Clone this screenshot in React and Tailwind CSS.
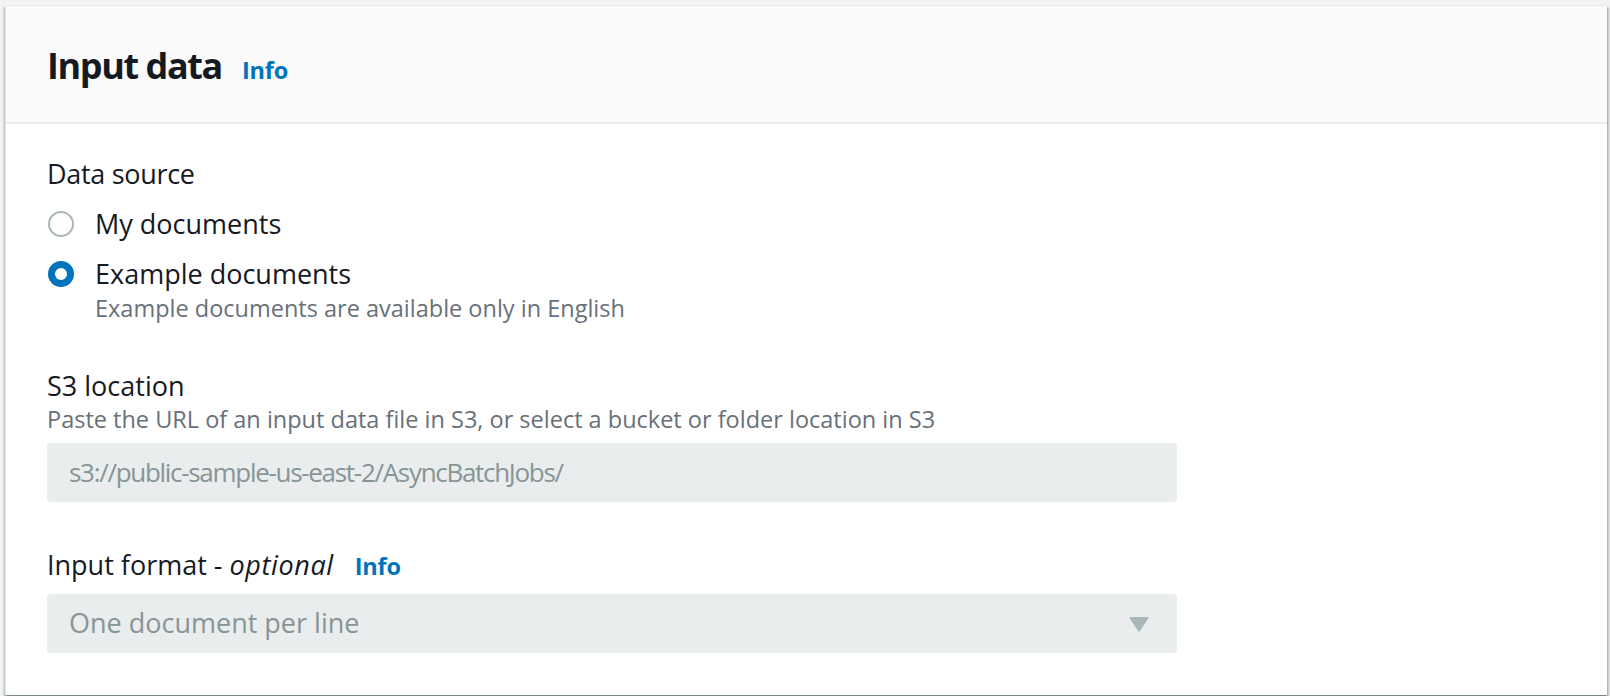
import React from 'react'

function Radio({ checked }) {
  if (checked) {
    return (
      <span className="w-[26px] h-[26px] rounded-full bg-[#0073bb] flex items-center justify-center shrink-0">
        <span className="w-[12px] h-[12px] rounded-full bg-white" />
      </span>
    )
  }
  return <span className="w-[26px] h-[26px] rounded-full border-[2.5px] border-[#aab7b8] bg-white shrink-0" />
}

export default function App() {
  return (
    <div className="w-[1610px] h-[696px] bg-[#f2f3f3] pt-[5px] pl-[5px] overflow-hidden font-['Open_Sans',sans-serif]">
      <div className="w-[1602px] h-[690px] bg-white border-t border-l border-[#e4e8e8] shadow-[0_2px_2px_0_rgba(0,28,36,0.35),2px_2px_2px_0_rgba(0,28,36,0.2),-2px_2px_2px_0_rgba(0,28,36,0.1)]">

        {/* Header */}
        <div className="h-[118px] bg-[#fafafa] border-b-2 border-[#eaeded] flex items-baseline pl-[41px] pt-[40px]">
          <h2 className="text-[36px] leading-[40px] font-bold text-[#16191f] tracking-[-1.4px]">Input data</h2>
          <a className="ml-[20px] text-[23.5px] font-bold text-[#0073bb] tracking-[-0.2px]">Info</a>
        </div>

        {/* Body */}
        <div className="pl-[41px] pt-[32px] text-[#16191f]">
          <div className="text-[27px] leading-[36px] tracking-[-0.3px]">Data source</div>

          <div className="mt-[14px] flex items-center gap-[21px] pl-[1px]">
            <Radio />
            <span className="text-[27px] leading-[36px]">My documents</span>
          </div>

          <div className="mt-[14px] flex items-center gap-[21px] pl-[1px]">
            <Radio checked />
            <span className="text-[27px] leading-[36px]">Example documents</span>
          </div>
          <div className="ml-[48px] mt-[1px] text-[23.5px] leading-[30px] text-[#687078]">
            Example documents are available only in English
          </div>

          <div className="mt-[48px] text-[27px] leading-[30px]">S3 location</div>
          <div className="mt-[4px] text-[23.5px] leading-[28px] text-[#687078]">
            Paste the URL of an input data file in S3, or select a bucket or folder location in S3
          </div>

          <div className="mt-[10px] w-[1130px] h-[59px] rounded-[4px] bg-[#eaeded] flex items-center pl-[22px] text-[26px] text-[#879596] tracking-[-1.3px]">
            s3://public-sample-us-east-2/AsyncBatchJobs/
          </div>

          <div className="mt-[45px] flex items-baseline text-[27px] leading-[36px]">
            <span>Input format - <i className="tracking-[0.6px]">optional</i></span>
            <a className="ml-[21px] text-[23.5px] font-bold text-[#0073bb] tracking-[-0.2px]">Info</a>
          </div>

          <div className="mt-[10px] w-[1130px] h-[59px] rounded-[4px] bg-[#eaeded] flex items-center justify-between pl-[22px] pr-[28px] text-[27px] text-[#879596]">
            <span>One document per line</span>
            <svg width="20" height="16" viewBox="0 0 20 16">
              <path d="M1.5 1 H18.5 Q20 1 19.2 2.4 L11 15 Q10 16.2 9 15 L0.8 2.4 Q0 1 1.5 1 Z" fill="#aab7b8" />
            </svg>
          </div>
        </div>
      </div>
    </div>
  )
}
